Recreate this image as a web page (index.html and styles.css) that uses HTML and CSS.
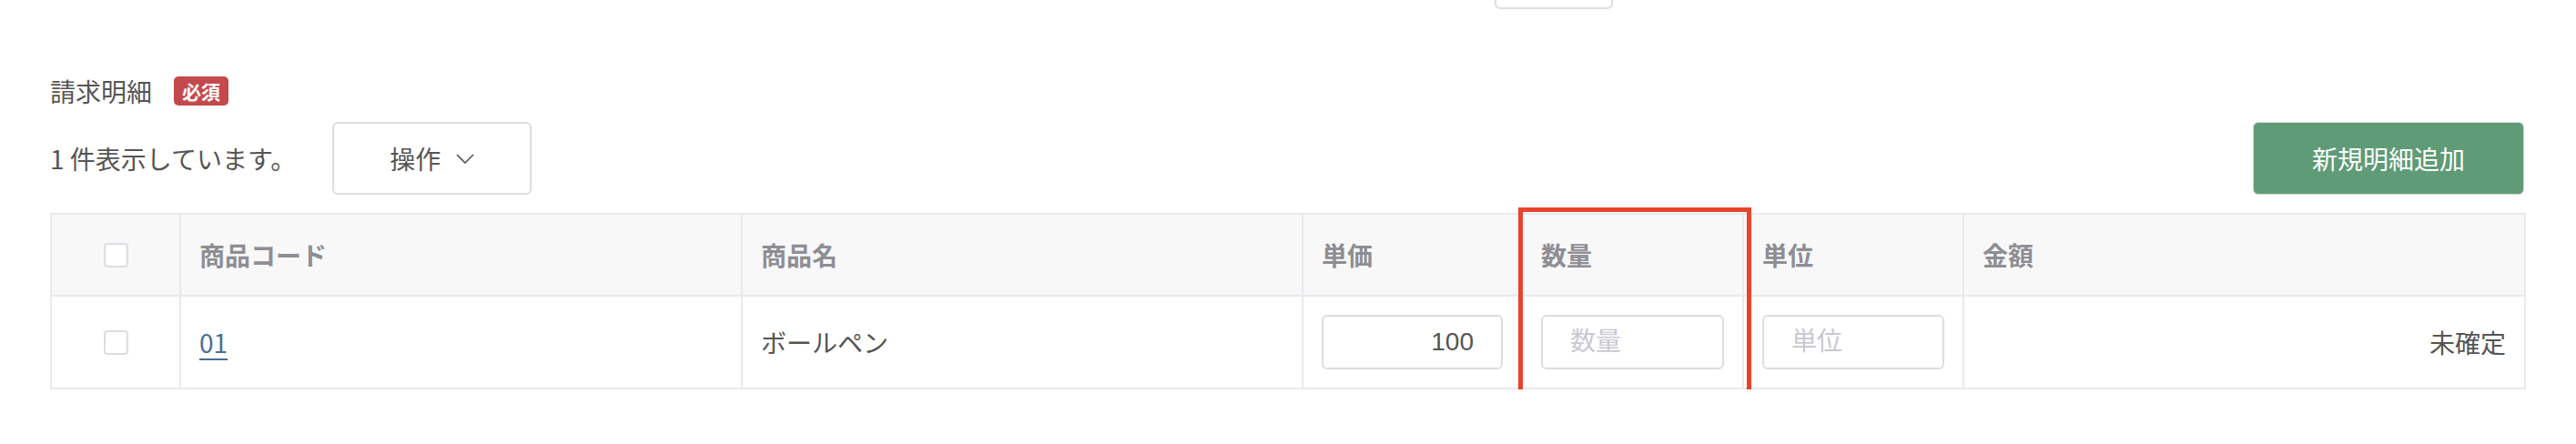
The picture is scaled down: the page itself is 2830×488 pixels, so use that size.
FILE: index.html
```html
<!DOCTYPE html>
<html lang="ja">
<head>
    <meta charset="UTF-8">
    <meta name="viewport" content="width=device-width, initial-scale=1.0">
    <title>請求明細</title>
    <link rel="stylesheet" href="styles.css">
</head>
<body>
    <div class="page">
        <!-- 上のセクションの末尾 -->
        <div class="prev-row">
            <div class="prev-box"></div>
        </div>

        <section class="details">
            <div class="section-title">
                <span>請求明細</span>
                <span class="badge">必須</span>
            </div>

            <div class="toolbar">
                <div class="toolbar-left">
                    <span class="count">1 件表示しています。</span>
                    <button class="btn-ops" type="button">
                        操作
                        <svg class="chevron" width="20" height="11" viewBox="0 0 20 11">
                            <polyline points="1,1 10,10 19,1" fill="none" stroke="#555" stroke-width="1.6"/>
                        </svg>
                    </button>
                </div>
                <button class="btn-add" type="button">新規明細追加</button>
            </div>

            <div class="table-wrap">
                <table class="lines">
                    <thead>
                        <tr>
                            <th class="col-check"><input type="checkbox" class="check"></th>
                            <th class="col-code">商品コード</th>
                            <th class="col-name">商品名</th>
                            <th class="col-price">単価</th>
                            <th class="col-qty">数量</th>
                            <th class="col-unit">単位</th>
                            <th class="col-amount">金額</th>
                        </tr>
                    </thead>
                    <tbody>
                        <tr>
                            <td><input type="checkbox" class="check"></td>
                            <td><a href="#" class="code-link">01</a></td>
                            <td>ボールペン</td>
                            <td><input type="text" class="cell-input num" value="100"></td>
                            <td><input type="text" class="cell-input" placeholder="数量"></td>
                            <td><input type="text" class="cell-input" placeholder="単位"></td>
                            <td class="amount">未確定</td>
                        </tr>
                    </tbody>
                </table>
                <div class="highlight"></div>
            </div>
        </section>
    </div>
</body>
</html>
```

FILE: styles.css
```css
* {
    box-sizing: border-box;
}

body {
    margin: 0;
    font-family: "Noto Sans CJK JP", "Noto Sans", sans-serif;
    font-size: 28px;
    color: #555;
    background-color: #fff;
}

.page {
    padding: 0 55px;
}

.prev-row {
    height: 10px;
    display: flex;
    align-items: flex-end;
    overflow: hidden;
    padding-left: 1587px;
}

.prev-box {
    flex-shrink: 0;
    width: 130px;
    height: 40px;
    border: 2px solid #dddde3;
    border-radius: 6px;
}

.section-title {
    margin-top: 74px;
    height: 32px;
    display: flex;
    align-items: center;
    gap: 24px;
    line-height: 1;
}

.badge {
    height: 32px;
    padding: 0 9px;
    display: flex;
    align-items: center;
    background-color: #c34a4c;
    color: #fff;
    border-radius: 5px;
    font-size: 21px;
    font-weight: 700;
}

.toolbar {
    margin-top: 18px;
    display: flex;
    justify-content: space-between;
    align-items: center;
}

.toolbar-left {
    display: flex;
    align-items: center;
    gap: 40px;
}

.btn-ops {
    width: 219px;
    height: 80px;
    display: flex;
    justify-content: center;
    align-items: center;
    gap: 17px;
    background-color: #fff;
    border: 2px solid #dddde3;
    border-radius: 6px;
    font-family: inherit;
    font-size: 28px;
    color: #555;
    cursor: pointer;
}

.btn-add {
    width: 298px;
    height: 80px;
    margin-right: 2px;
    background-color: #5f9b77;
    border: 1px solid #d5dbd7;
    border-radius: 6px;
    font-family: inherit;
    font-size: 28px;
    color: #fff;
    cursor: pointer;
}

.table-wrap {
    position: relative;
    margin-top: 20px;
}

.lines {
    width: 2720px;
    table-layout: fixed;
    border-spacing: 0;
    border-top: 2px solid #e9e9ee;
    border-left: 2px solid #e9e9ee;
}

.lines th,
.lines td {
    padding: 0 20px;
    border-right: 2px solid #e9e9ee;
    border-bottom: 2px solid #e9e9ee;
    text-align: left;
}

.lines th {
    height: 90px;
    background-color: #f8f8f9;
    color: #8e8e93;
    font-weight: 700;
}

.lines td {
    height: 102px;
}

.col-check { width: 142px; }
.col-code { width: 617px; }
.col-name { width: 616px; }
.col-price { width: 241px; }
.col-qty { width: 243px; }
.col-unit { width: 242px; }
.col-amount { width: 617px; }

.check {
    appearance: none;
    display: block;
    width: 27px;
    height: 27px;
    margin: 0 auto;
    background-color: #fff;
    border: 2px solid #dddde3;
    border-radius: 4px;
}

.code-link {
    color: #4a6d97;
    text-decoration: underline;
    text-decoration-thickness: 2px;
    text-underline-offset: 6px;
}

.cell-input {
    width: 100%;
    height: 60px;
    padding: 0 30px;
    border: 2px solid #dddde3;
    border-radius: 6px;
    font-family: "Liberation Sans", "Noto Sans CJK JP", sans-serif;
    font-size: 28px;
    color: #555;
}

.cell-input::placeholder {
    color: #c9c9d0;
}

.cell-input.num {
    text-align: right;
}

.lines td.amount {
    text-align: right;
}

/* 注目箇所の枠 */
.highlight {
    position: absolute;
    left: 1613px;
    top: -6px;
    width: 256px;
    height: 214px;
    border: 5px solid #e8432b;
    pointer-events: none;
}
```
